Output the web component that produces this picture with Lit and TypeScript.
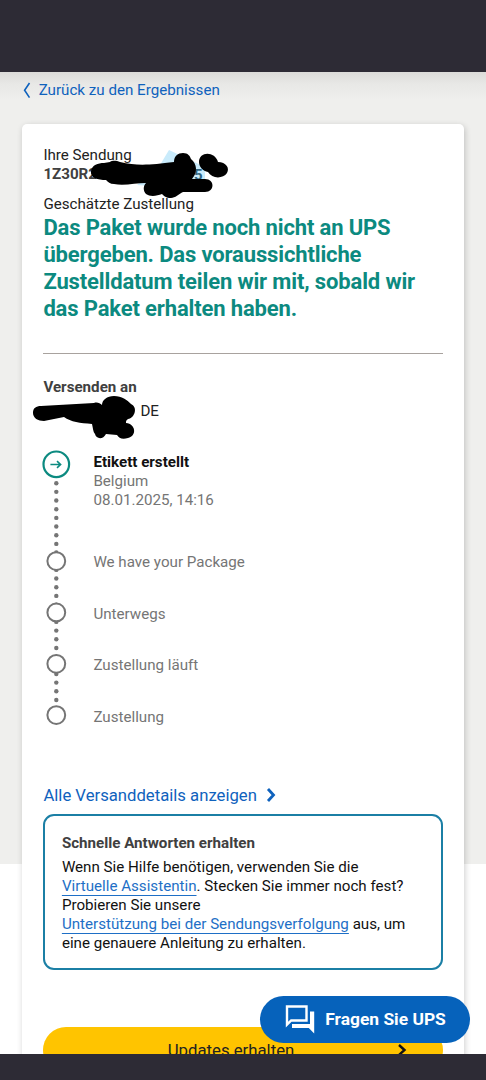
import { LitElement, html, css, svg } from "lit";
import { customElement } from "lit/decorators.js";

const STEPS = ["We have your Package", "Unterwegs", "Zustellung läuft", "Zustellung"];
const NODES = [561.3, 612.6, 664, 715.3].map((y) => y - 450.2);
const DOTS = Array.from({ length: 27 }, (_, i) => 33.2 + i * 8.67);

@customElement("tracking-timeline")
class TrackingTimeline extends LitElement {
  static styles = css`
    :host { display: flex; font: 15.15px/19px Roboto, sans-serif; color: #757575; }
    .rail { flex: none; width: 50px; height: 277px; overflow: visible; }
    .steps { display: flex; flex-direction: column; padding-top: 3px; }
    .current { height: 100px; }
    .title { color: #111; font-weight: 700; }
    .step { height: 51.5px; }
  `;
  render() {
    return html`
      <svg class="rail" viewBox="0 0 50 277">
        ${DOTS.map((y) => svg`<circle cx="13.3" cy=${y} r="2.2" fill="#757575"></circle>`)}
        <circle cx="13.3" cy="14.3" r="12.8" fill="#fff" stroke="#0c8a80" stroke-width="2.2"></circle>
        <path d="M7.4 14.5H17.2M14 11.1l3.6 3.4-3.6 3.4" fill="none" stroke="#0c8a80" stroke-width="1.6"></path>
        ${NODES.map((y) => svg`<circle cx="13.3" cy=${y} r="8.9" fill="#fff" stroke="#757575" stroke-width="2"></circle>`)}
      </svg>
      <div class="steps">
        <div class="current">
          <div class="title">Etikett erstellt</div>
          <div>Belgium</div>
          <div>08.01.2025, 14:16</div>
        </div>
        ${STEPS.map((s) => html`<div class="step">${s}</div>`)}
      </div>`;
  }
}

@customElement("app-root")
class AppRoot extends LitElement {
  static styles = css`
    :host {
      display: flex; flex-direction: column; position: relative;
      width: 486px; height: 1080px; overflow: hidden;
      font: 15.15px/19px Roboto, sans-serif; color: #222;
    }
    .bar { flex: none; height: 71.5px; background: #2d2b35; }
    .bottom { height: 26.5px; }
    .page {
      flex: 1; min-height: 0; overflow: hidden; box-sizing: border-box; padding: 0 21.7px;
      background: linear-gradient(#dcdbd9, #e8e8e6 12px, #efefed 28px, #efefed 792px, #fff 792px);
    }
    .back { display: flex; align-items: center; gap: 8px; height: 19px; padding-top: 9.5px; color: #0f62bd; }
    .back svg { width: 9px; height: 17px; }
    .card {
      box-sizing: border-box; height: 990px; margin-top: 23.5px; padding: 22px 21.7px 0;
      background: #fff; border-radius: 5px; box-shadow: 1px 2px 6px rgba(0, 0, 0, .2);
    }
    .number { font-weight: 700; color: #404040; }
    .eta { margin-top: 11px; }
    .status { margin: 0; color: #0c8a80; font: 700 22px/27px Roboto, sans-serif; letter-spacing: -.14px; white-space: nowrap; }
    .rule { height: 1.3px; margin-top: 31.3px; background: #a8a29e; }
    .to { margin-top: 23.7px; font-weight: 700; color: #404040; }
    .place { margin-top: 5.3px; padding-left: 97px; }
    tracking-timeline { margin-top: 29.4px; }
    .details { display: flex; align-items: center; gap: 9px; margin-top: 25.8px; height: 20px; color: #0f62bd; font-size: 16.7px; }
    .details svg { width: 10px; height: 14px; }
    .help {
      box-sizing: border-box; height: 156px; margin-top: 9px; padding: 17.5px 16.5px;
      border: 2px solid #1b7fa5; border-radius: 11px; color: #111; line-height: 18.95px; white-space: nowrap;
    }
    .help b { display: block; margin-bottom: 5.5px; color: #404040; }
    .help a { color: #1e6fc6; text-decoration: underline 1px; text-underline-offset: 4px; text-decoration-skip-ink: none; }
    .updates {
      display: grid; grid-template-columns: 1fr auto; align-items: center; height: 46px; margin-top: 57px;
      padding: 0 36px 0 22px; border-radius: 23px; background: #ffc400; text-align: center; font-size: 16.75px;
    }
    .updates svg { width: 10px; height: 14px; }
    .chat {
      position: absolute; left: 260.3px; top: 995.5px; width: 209.5px; height: 47.6px; box-sizing: border-box;
      display: flex; align-items: center; gap: 10px; padding-left: 25px; border-radius: 24px;
      background: #0662bb; color: #fff; font-size: 17.4px; font-weight: 700;
    }
    .chat svg { width: 30px; height: 29px; }
    .ink { position: absolute; left: 0; top: 0; width: 486px; height: 450px; pointer-events: none; }
    .digit { font: 700 15px Roboto, sans-serif; fill: #32657f; }
  `;
  render() {
    return html`
      <div class="bar"></div>
      <main class="page">
        <div class="back">
          <svg viewBox="0 0 9 17"><path d="M7.5 1 2.6 8.3l4.9 7.3" fill="none" stroke="currentColor" stroke-width="1.6"></path></svg>
          <span>Zurück zu den Ergebnissen</span>
        </div>
        <section class="card">
          <div>Ihre Sendung</div>
          <div class="number">1Z30R2</div>
          <div class="eta">Geschätzte Zustellung</div>
          <h1 class="status">Das Paket wurde noch nicht an UPS<br />übergeben. Das voraussichtliche<br />Zustelldatum teilen wir mit, sobald wir<br />das Paket erhalten haben.</h1>
          <div class="rule"></div>
          <div class="to">Versenden an</div>
          <div class="place">DE</div>
          <tracking-timeline></tracking-timeline>
          <div class="details">
            <span>Alle Versanddetails anzeigen</span>
            <svg viewBox="0 0 10 14"><path d="M2 1l5.5 6L2 13" fill="none" stroke="currentColor" stroke-width="2.8"></path></svg>
          </div>
          <div class="help">
            <b>Schnelle Antworten erhalten</b>
            Wenn Sie Hilfe benötigen, verwenden Sie die<br /><a>Virtuelle Assistentin</a>. Stecken Sie immer noch fest?<br />Probieren Sie unsere<br /><a>Unterstützung bei der Sendungsverfolgung</a> aus, um<br />eine genauere Anleitung zu erhalten.
          </div>
          <div class="updates">
            <span>Updates erhalten</span>
            <svg viewBox="0 0 10 14"><path d="M2 2l5.5 5L2 12" fill="none" stroke="#111" stroke-width="2.4"></path></svg>
          </div>
        </section>
      </main>
      <div class="bar bottom"></div>
      <svg class="ink" viewBox="0 0 486 450">
        <path d="M169 150l36 17v13l-12 4-42 2-14-1 23-20z" fill="#c9ebfb"></path>
        <text class="digit" x="194" y="179.5">5</text>
        <path d="M91 171c1-6 7-8 13-8l6-1c3-2 7-1 10 0 17 4 30 3 54 0 0-6 4-9 9-9 5 0 7 3 8 6 6 5 7 13 1 20h13c10 0 10 13 0 13h-22c-4 2-8 6-12 6-5 0-7-2-9-4-5 2-12 3-16 0-3-3-3-8 0-11-10 0-22 3-32 1-4 0-6-2-8-4-8 0-16-2-15-9z"></path>
        <path d="M199 162c0-11 16-11 19 0 8 0 12 6 9 11-4 6-15 6-19-1-5-1-9-5-9-10z"></path>
        <path d="M33 413c0-5 3-7 8-7l53-3c3-1 6 0 8 2 0-5 5-9 12-9 8 0 13 4 17 8 7 3 4 14-3 15-1 1-2 1-2 4 10 1 11 13 2 15-6 2-9 0-11-3l-11-1c-3 6-10 5-11 0-2-2-2-6-3-10-12-1-21-2-28-7l-20 4c-6 0-11-3-11-8z"></path>
      </svg>
      <div class="chat">
        <svg viewBox="0 0 30 29"><path d="M2 1.5h19.5v14H6.2L2 19.7z" fill="none" stroke="#fff" stroke-width="2.4"></path><path d="M25 6.5h4.2V28.5l-5.4-5.4H7v-4.2h18z" fill="#fff"></path></svg>
        <span>Fragen Sie UPS</span>
      </div>`;
  }
}
